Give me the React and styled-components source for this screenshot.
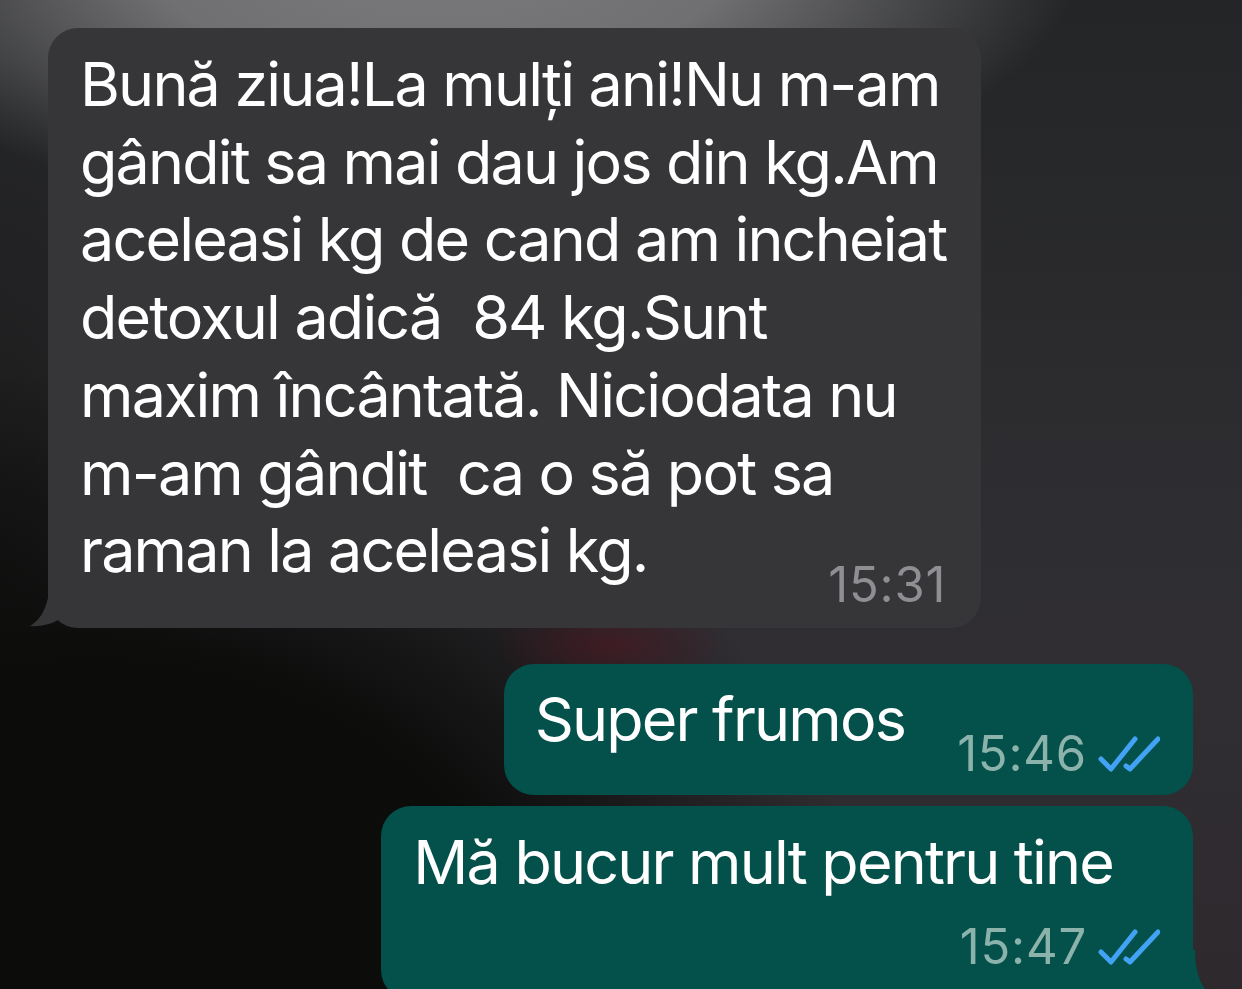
import React from "react";
import styled, { createGlobalStyle } from "styled-components";

const messages = [
  {
    id: 1,
    incoming: true,
    lines: [
      "Bună ziua!La mulți ani!Nu m-am",
      "gândit sa mai dau jos din kg.Am",
      "aceleasi kg de cand am incheiat",
      "detoxul adică  84 kg.Sunt",
      "maxim încântată. Niciodata nu",
      "m-am gândit  ca o să pot sa",
      "raman la aceleasi kg.",
    ],
    time: "15:31",
    tail: true,
  },
  {
    id: 2,
    lines: ["Super frumos"],
    time: "15:46",
    inline: true,
  },
  {
    id: 3,
    lines: ["Mă bucur mult pentru tine"],
    time: "15:47",
    tail: true,
    reserve: 47,
  },
];

const Ticks = () => (
  <TickSvg viewBox="0 0 62 40">
    <path d="M3 24 L13 34 L37 4" />
    <path d="M28 31 L32 34 L60 4" />
  </TickSvg>
);

const TailIn = () => (
  <TailSvg $side="left" viewBox="0 0 40 50">
    <path d="M20 0 C20 22 14 40 0 48 C10 49 22 46 30 41 C34 44 38 46 40 48 L40 0 Z" />
  </TailSvg>
);

const TailOut = () => (
  <TailSvg $side="right" viewBox="0 0 40 50">
    <path d="M20 0 C20 22 26 40 40 48 C30 49 18 46 10 41 C6 44 2 46 0 48 L0 0 Z" />
  </TailSvg>
);

export default function App() {
  return (
    <>
      <GlobalStyle />
      <Page>
        <Thread>
          {messages.map((m) => (
            <Row key={m.id} $incoming={m.incoming}>
              <Bubble $incoming={m.incoming} $inline={m.inline}>
                <Text $reserve={m.reserve || 0}>
                  {m.lines.map((l, i) => (
                    <Line key={i}>{l}</Line>
                  ))}
                </Text>
                <Meta $incoming={m.incoming} $inline={m.inline}>
                  <Time $incoming={m.incoming}>{m.time}</Time>
                  {!m.incoming && <Ticks />}
                </Meta>
                {m.tail && (m.incoming ? <TailIn /> : <TailOut />)}
              </Bubble>
            </Row>
          ))}
        </Thread>
      </Page>
    </>
  );
}

const GlobalStyle = createGlobalStyle`
  html, body {
    margin: 0;
    padding: 0;
    background: #1c1c1c;
  }
  body {
    font-family: Inter, "Noto Sans", sans-serif;
  }
`;

const Page = styled.div`
  width: 1242px;
  height: 989px;
  overflow: hidden;
  position: relative;
  background:
    radial-gradient(ellipse 120px 45px at 610px 645px, rgba(95, 18, 32, 0.45), transparent 100%),
    radial-gradient(ellipse 780px 640px at 100px 1010px, #0c0c0b 0%, #0c0c0b 55%, rgba(12, 12, 11, 0) 100%),
    radial-gradient(ellipse 200px 500px at 0px 560px, rgba(14, 14, 13, 0.7) 0%, rgba(14, 14, 13, 0) 100%),
    radial-gradient(ellipse 640px 260px at 440px -40px, #7a7a7c 0%, #707072 45%, rgba(60, 60, 62, 0) 100%),
    linear-gradient(to bottom, #242526 0%, #2c2c2f 40%, #302e33 70%, #2e292d 100%);
`;

const Thread = styled.div`
  display: flex;
  flex-direction: column;
  padding: 28px 49px 0 48px;
`;

const Row = styled.div`
  display: flex;
  justify-content: ${({ $incoming }) => ($incoming ? "flex-start" : "flex-end")};
  margin-bottom: ${({ $incoming }) => ($incoming ? "36px" : "11px")};
`;

const Bubble = styled.div`
  position: relative;
  background: ${({ $incoming }) => ($incoming ? "#363638" : "#04504a")};
  color: #fff;
  border-radius: 30px;
  padding: ${({ $incoming, $inline }) =>
    $incoming ? "18px 35px 17px 32px" : $inline ? "17px 33px 15px 31px" : "18px 33px 27px 32px"};
  display: flex;
  flex-direction: ${({ $inline }) => ($inline ? "row" : "column")};
  align-items: ${({ $inline }) => ($inline ? "flex-start" : "stretch")};
  gap: ${({ $inline }) => ($inline ? "52px" : "0")};
`;

const Text = styled.div`
  font-family: Inter, "Noto Sans", sans-serif;
  font-size: 61px;
  line-height: 77.7px;
  letter-spacing: -1.8px;
  white-space: pre;
  padding-right: ${({ $reserve }) => $reserve}px;
`;

const Line = styled.div``;

const Meta = styled.div`
  display: flex;
  align-items: center;
  justify-content: flex-end;
  gap: 11px;
  height: 52px;
  margin-top: ${({ $incoming, $inline }) => ($inline ? "47px" : $incoming ? "-31px" : "19px")};
`;

const Time = styled.span`
  font-family: Inter, "Noto Sans", sans-serif;
  font-size: 49px;
  line-height: 1;
  letter-spacing: 0.8px;
  color: ${({ $incoming }) => ($incoming ? "#8e8e93" : "#8cb3ab")};
`;

const TickSvg = styled.svg`
  width: 62px;
  height: 40px;
  margin-top: 2px;
  fill: none;
  stroke: #42a2f3;
  stroke-width: 5;
  stroke-linecap: round;
  stroke-linejoin: round;
`;

const TailSvg = styled.svg`
  position: absolute;
  bottom: 0;
  ${({ $side }) => ($side === "left" ? "left: -18px;" : "right: -22px;")}
  width: 40px;
  height: 50px;
  fill: ${({ $side }) => ($side === "left" ? "#363638" : "#04504a")};
`;
